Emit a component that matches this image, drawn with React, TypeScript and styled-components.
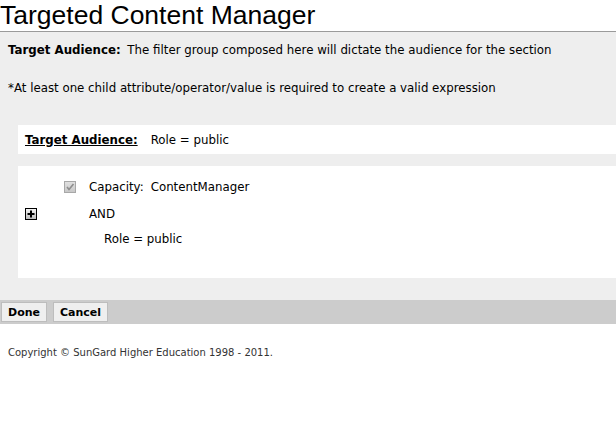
import styled, { createGlobalStyle } from "styled-components";

const GlobalStyle = createGlobalStyle`
    body {
        margin: 0;
        background: #fff;
        font-family: "DejaVu Sans", Verdana, sans-serif;
        color: #000;
    }
`;

const Title = styled.h1`
    margin: 0;
    height: 31px;
    font-family: "Liberation Sans", Arial, sans-serif;
    font-size: 26.5px;
    font-weight: normal;
    line-height: 30px;
    color: #000;
`;

const Panel = styled.div`
    background: #eeeeee;
    border-top: 1px solid #9a9a9a;
    padding: 11px 0 22px 0;
`;

const Note = styled.p<{ $gap: number }>`
    margin: 0 0 ${({ $gap }) => $gap}px 8px;
    font-size: 11.8px;
    line-height: 15px;
`;

const Label = styled.b`
    margin-right: 3px;
`;

const Box = styled.div`
    margin-left: 18px;
    background: #fff;
`;

const SummaryBox = styled(Box)`
    height: 29px;
    display: flex;
    align-items: center;
    padding-left: 7px;
    font-size: 11.8px;
    margin-bottom: 12px;
`;

const SummaryLabel = styled.span`
    font-weight: bold;
    text-decoration: underline;
    margin-right: 13px;
`;

const TreeBox = styled(Box)`
    display: grid;
    grid-template-columns: 39px 25px 1fr;
    grid-template-rows: 28px 26px 24px;
    padding: 7px 0 27px 7px;
    font-size: 11.8px;
    align-items: center;
`;

const Cell = styled.div<{ $col: number; $indent?: number }>`
    grid-column: ${({ $col }) => $col};
    padding-left: ${({ $indent }) => $indent ?? 0}px;
    display: flex;
    align-items: center;
`;

const Check = styled.span`
    width: 12px;
    height: 12px;
    box-sizing: border-box;
    border: 1px solid #a8a8a8;
    background: linear-gradient(#e0e0e0, #c8c8c8);
    display: flex;
    align-items: center;
    justify-content: center;
`;

const PlusButton = styled.span`
    width: 12px;
    height: 12px;
    box-sizing: border-box;
    border: 1px solid #000;
    background: linear-gradient(#f4f4f4, #bdbdbd);
    display: flex;
    align-items: center;
    justify-content: center;
`;

const Key = styled.span`
    margin-right: 7px;
`;

const ButtonBar = styled.div`
    background: #cccccc;
    height: 24px;
    display: flex;
    align-items: center;
    gap: 6px;
    padding-left: 1px;
`;

const Button = styled.button`
    height: 20px;
    padding: 0 6px;
    border: 1px solid #bdbdbd;
    background: #efefef;
    font-family: "DejaVu Sans", Verdana, sans-serif;
    font-size: 11px;
    font-weight: bold;
    color: #000;
    border-radius: 0;
`;

const Footer = styled.p`
    margin: 22px 0 0 8px;
    font-size: 10px;
    line-height: 14px;
    color: #333;
`;

export default function App() {
    return (
        <>
            <GlobalStyle />
            <Title>Targeted Content Manager</Title>
            <Panel>
                <Note $gap={23}>
                    <Label>Target Audience:</Label> The filter group composed here will dictate
                    the audience for the section
                </Note>
                <Note $gap={29}>
                    *At least one child attribute/operator/value is required to create a valid
                    expression
                </Note>
                <SummaryBox>
                    <SummaryLabel>Target Audience:</SummaryLabel>
                    Role = public
                </SummaryBox>
                <TreeBox>
                    <Cell $col={2}>
                        <Check>
                            <svg width="10" height="10" viewBox="0 0 10 10">
                                <path d="M2 5 L4 7.5 L8.5 2" fill="none" stroke="#8e8e8e" strokeWidth="1.6" />
                            </svg>
                        </Check>
                    </Cell>
                    <Cell $col={3}>
                        <Key>Capacity:</Key> ContentManager
                    </Cell>
                    <Cell $col={1}>
                        <PlusButton>
                            <svg width="10" height="10" viewBox="0 0 10 10">
                                <path d="M5 1.5 V8.5 M1.5 5 H8.5" stroke="#000" strokeWidth="2" />
                            </svg>
                        </PlusButton>
                    </Cell>
                    <Cell $col={3}>AND</Cell>
                    <Cell $col={3} $indent={15}>
                        Role = public
                    </Cell>
                </TreeBox>
            </Panel>
            <ButtonBar>
                <Button>Done</Button>
                <Button>Cancel</Button>
            </ButtonBar>
            <Footer>Copyright © SunGard Higher Education 1998 - 2011.</Footer>
        </>
    );
}
